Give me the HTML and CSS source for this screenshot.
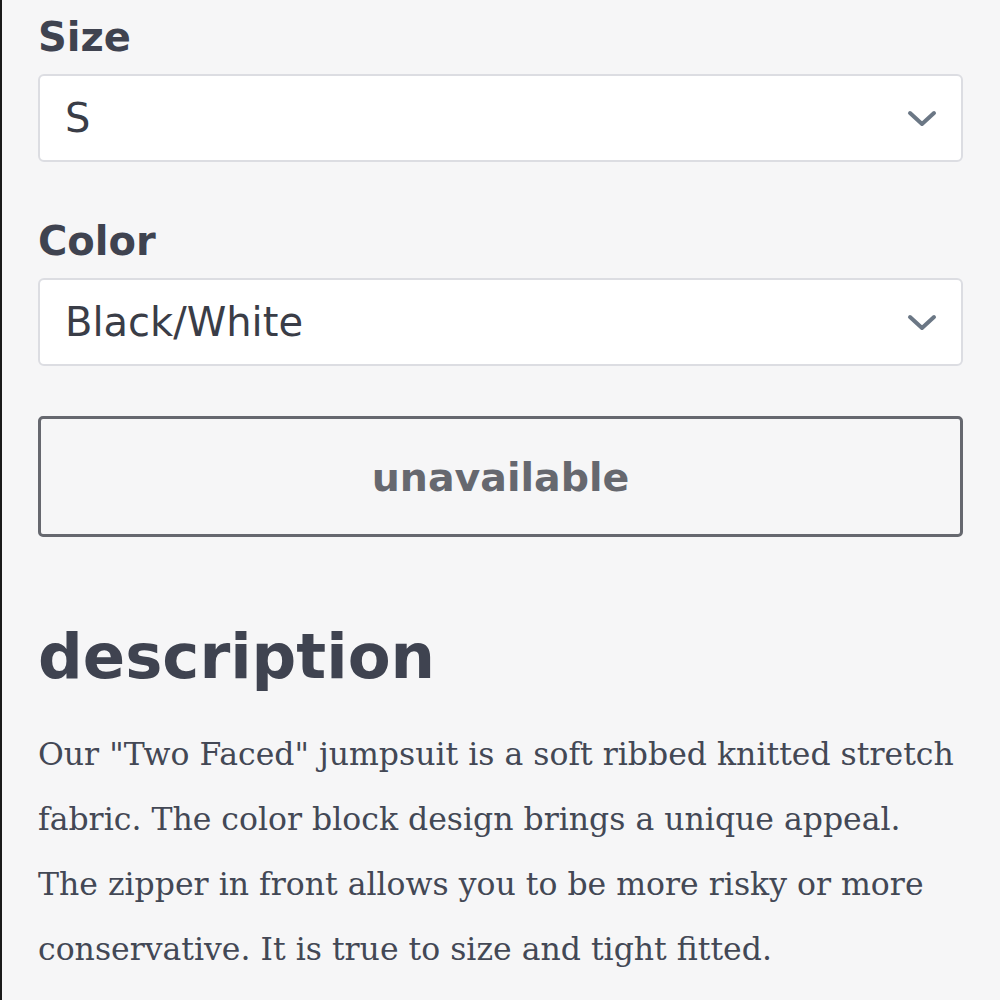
FILE: index.html
```html
<!DOCTYPE html>
<html lang="en">
<head>
    <meta charset="UTF-8">
    <meta name="viewport" content="width=device-width, initial-scale=1.0">
    <title>Two Faced Jumpsuit</title>
    <link rel="stylesheet" href="styles.css">
</head>
<body>
    <div class="product-form">
        <div class="option-group">
            <label class="option-label" for="size">Size</label>
            <div class="select-wrap">
                <select id="size" class="option-select">
                    <option>S</option>
                    <option>M</option>
                    <option>L</option>
                </select>
                <svg class="select-chevron" width="30" height="18" viewBox="0 0 30 18">
                    <polyline points="3,3 15,14 27,3" fill="none" stroke="currentColor" stroke-width="4" stroke-linecap="round" stroke-linejoin="round"/>
                </svg>
            </div>
        </div>
        <div class="option-group">
            <label class="option-label" for="color">Color</label>
            <div class="select-wrap">
                <select id="color" class="option-select">
                    <option>Black/White</option>
                </select>
                <svg class="select-chevron" width="30" height="18" viewBox="0 0 30 18">
                    <polyline points="3,3 15,14 27,3" fill="none" stroke="currentColor" stroke-width="4" stroke-linecap="round" stroke-linejoin="round"/>
                </svg>
            </div>
        </div>
        <button class="buy-button" disabled>unavailable</button>

        <div class="description">
            <h2 class="description-title">description</h2>
            <p class="description-text">Our "Two Faced" jumpsuit is a soft ribbed knitted stretch fabric. The color block design brings a unique appeal. The zipper in front allows you to be more risky or more conservative. It is true to size and tight fitted.</p>
        </div>
    </div>
</body>
</html>
```

FILE: styles.css
```css
body {
    margin: 0;
    background: #f6f6f7;
    border-left: 2px solid #1a1a1a;
    min-height: 100vh;
    box-sizing: border-box;
}

.product-form {
    display: flex;
    flex-direction: column;
    padding: 13px 37px 0 36px;
    font-family: "DejaVu Sans", "Liberation Sans", sans-serif;
    color: #3f4350;
}

.option-group {
    display: flex;
    flex-direction: column;
    gap: 13px;
    margin-bottom: 50px;
}

.option-group + .option-group {
    margin-top: 5px;
}

.option-label {
    font-size: 40px;
    font-weight: 700;
    line-height: 48px;
}

.select-wrap {
    position: relative;
}

.option-select {
    appearance: none;
    -webkit-appearance: none;
    width: 100%;
    height: 88px;
    padding: 0 80px 0 25px;
    border: 2px solid #dcdde2;
    border-radius: 6px;
    background: #ffffff;
    font-family: "DejaVu Sans", "Liberation Sans", sans-serif;
    font-size: 40px;
    color: #3a3d47;
    outline: none;
}

.select-chevron {
    position: absolute;
    right: 26px;
    top: 36px;
    color: #6b7785;
    pointer-events: none;
}

.buy-button {
    display: block;
    width: 100%;
    height: 121px;
    margin: 0;
    padding: 0;
    border: 3px solid #66686f;
    border-radius: 5px;
    background: transparent;
    font-family: "DejaVu Sans", "Liberation Sans", sans-serif;
    font-size: 39.5px;
    font-weight: 700;
    color: #66686f;
}

.description {
    margin-top: 80px;
}

.description-title {
    margin: 0 0 25px;
    font-size: 62.5px;
    font-weight: 700;
    line-height: 80px;
    color: #3f4350;
}

.description-text {
    margin: 0;
    font-family: "DejaVu Serif", "Liberation Serif", serif;
    font-size: 31.5px;
    line-height: 65px;
    color: #434855;
}
```
